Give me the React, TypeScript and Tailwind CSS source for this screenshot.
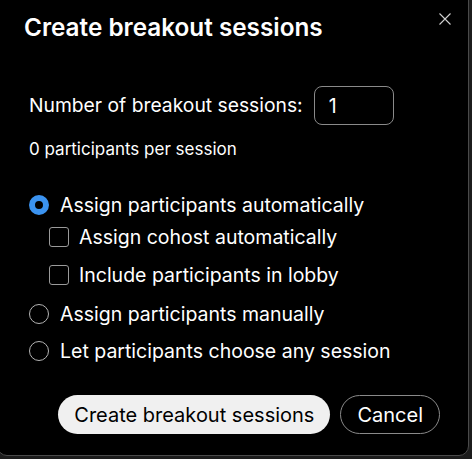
import { useState } from 'react';

const font = { fontFamily: 'Inter, "Noto Sans", sans-serif' };

function Radio({ checked, label, onClick, className }: { checked: boolean; label: string; onClick: () => void; className?: string }) {
    return (
        <button type="button" onClick={onClick} className={'flex items-center h-[28px] gap-[11px] text-left ' + (className ?? '')}>
            {checked ? (
                <span className="w-[20px] h-[20px] rounded-full border-[6px] border-[#3b93f0] bg-black shrink-0" />
            ) : (
                <span className="w-[20px] h-[20px] rounded-full border border-[#b4b4b4] shrink-0" />
            )}
            <span className="text-[19.5px] leading-[28px] text-white">{label}</span>
        </button>
    );
}

function Check({ checked, label, onClick, className }: { checked: boolean; label: string; onClick: () => void; className?: string }) {
    return (
        <button type="button" onClick={onClick} className={'flex items-center h-[28px] gap-[10px] text-left ' + (className ?? '')}>
            <span
                className={
                    checked
                        ? 'w-[20px] h-[20px] rounded-[3px] border border-[#3b93f0] bg-[#3b93f0] shrink-0'
                        : 'w-[20px] h-[20px] rounded-[3px] border border-[#9a9a9a] shrink-0'
                }
            />
            <span className="text-[19.5px] leading-[28px] text-white">{label}</span>
        </button>
    );
}

export default function App() {
    const [count, setCount] = useState('1');
    const [mode, setMode] = useState<'auto' | 'manual' | 'choose'>('auto');
    const [cohost, setCohost] = useState(false);
    const [lobby, setLobby] = useState(false);

    return (
        <div className="w-[472px] h-[459px] bg-[#1c1c1c] overflow-hidden" style={font}>
            <div className="-ml-[3px] -mt-[12px] w-[472px] h-[468px] bg-black border border-[#4a4a4a] rounded-[10px] flex flex-col">
                {/* Header */}
                <div className="flex items-start justify-between pl-[26px] pr-[17px] pt-[22px]">
                    <h2 className="text-[24.3px] font-semibold text-white leading-[32px]">Create breakout sessions</h2>
                    <button type="button" className="mt-[2px] text-[#d0d0d0]">
                        <svg width="12" height="12" viewBox="0 0 12 12" fill="none" stroke="currentColor" strokeWidth="1.1">
                            <path d="M0.5 0.5 L11.5 11.5 M11.5 0.5 L0.5 11.5" />
                        </svg>
                    </button>
                </div>

                {/* Count */}
                <div className="flex items-center gap-[11px] pl-[31px] mt-[43px] h-[39px]">
                    <span className="text-[19.3px] text-white">Number of breakout sessions:</span>
                    <input
                        value={count}
                        onChange={e => setCount(e.target.value)}
                        className="w-[80px] h-[39px] rounded-[8px] border border-[#8a8a8a] bg-black px-[14px] text-[19.5px] text-white outline-none"
                    />
                </div>
                <p className="pl-[31px] mt-[12px] text-[17px] leading-[24px] text-white">0 participants per session</p>

                {/* Options */}
                <div className="pl-[31px] mt-[30px] flex flex-col">
                    <Radio checked={mode === 'auto'} label="Assign participants automatically" onClick={() => setMode('auto')} />
                    <div className="pl-[20px] flex flex-col">
                        <Check className="mt-[4px]" checked={cohost} label="Assign cohost automatically" onClick={() => setCohost(c => !c)} />
                        <Check className="mt-[10px]" checked={lobby} label="Include participants in lobby" onClick={() => setLobby(l => !l)} />
                    </div>
                    <Radio className="mt-[11px]" checked={mode === 'manual'} label="Assign participants manually" onClick={() => setMode('manual')} />
                    <Radio className="mt-[9px]" checked={mode === 'choose'} label="Let participants choose any session" onClick={() => setMode('choose')} />
                </div>

                {/* Footer */}
                <div className="mt-[30px] flex justify-end gap-[10px] pr-[28px]">
                    <button type="button" className="h-[39px] px-[16px] rounded-full bg-[#f0f0f0] text-[20px] text-black">
                        Create breakout sessions
                    </button>
                    <button type="button" className="h-[39px] px-[16px] rounded-full border border-[#8a8a8a] text-[20px] text-white">
                        Cancel
                    </button>
                </div>
            </div>
        </div>
    );
}
